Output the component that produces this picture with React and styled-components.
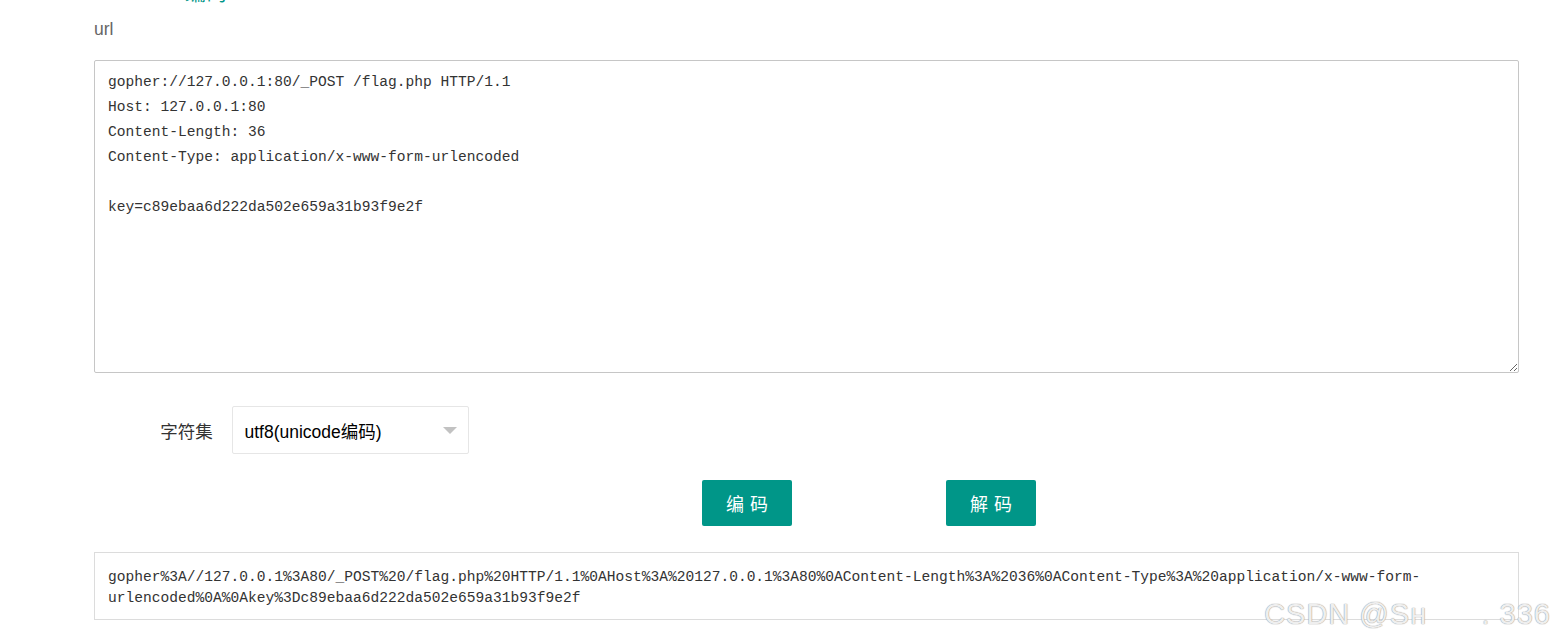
import React from 'react';
import styled, { createGlobalStyle } from 'styled-components';

const GlobalStyle = createGlobalStyle`
  html, body {
    margin: 0;
    padding: 0;
    background: #fff;
  }
  body {
    font-family: "Liberation Sans", "Noto Sans CJK SC", sans-serif;
  }
`;

const Page = styled.div`
  position: relative;
  height: 640px;
  overflow: hidden;
  padding: 0 38px 0 94px;
  box-sizing: border-box;
`;

// only the bottom of this tab title shows in the shot
const Title = styled.div`
  margin: -20px 0 0 91px;
  height: 25px;
  line-height: 25px;
  font-size: 21px;
  color: #009688;
`;

const UrlLabel = styled.div`
  margin-top: 14px;
  line-height: 20px;
  font-size: 17.5px;
  color: #666;
`;

const Source = styled.textarea`
  display: block;
  width: 100%;
  height: 313px;
  margin-top: 21px;
  padding: 9px 13px 8px;
  box-sizing: border-box;
  border: 1px solid #c6c6c6;
  border-radius: 2px;
  outline: none;
  font-family: "Liberation Mono", "DejaVu Sans Mono", monospace;
  font-size: 14.58px;
  line-height: 25px;
  color: #333;
  resize: both;
`;

const FormRow = styled.div`
  display: flex;
  align-items: center;
  margin-top: 33px;
`;

const FieldLabel = styled.label`
  width: 100px;
  padding: 0 18.75px;
  text-align: right;
  font-size: 17.5px;
  color: #333;
`;

const Select = styled.div`
  position: relative;
  width: 237px;
  height: 48px;
  box-sizing: border-box;
  border: 1px solid #e6e6e6;
  border-radius: 2px;
  padding-left: 12px;
  display: flex;
  align-items: center;
  font-size: 17.5px;
  color: #000;
`;

const Arrow = styled.span`
  position: absolute;
  right: 11px;
  top: 20px;
  width: 0;
  height: 0;
  border-left: 7px solid transparent;
  border-right: 7px solid transparent;
  border-top: 7px solid #c2c2c2;
`;

const ButtonRow = styled.div`
  display: flex;
  gap: 154px;
  margin-top: 26px;
  padding-left: 608px;
`;

const Button = styled.button`
  width: 90px;
  height: 46px;
  border: none;
  border-radius: 2px;
  background: #009688;
  color: #fff;
  font-family: "Noto Sans CJK SC", sans-serif;
  font-size: 18px;
  letter-spacing: 6px;
  text-indent: 6px;
  cursor: pointer;
`;

const Result = styled.div`
  margin-top: 26px;
  height: 68px;
  box-sizing: border-box;
  border: 1px solid #dcdcdc;
  padding: 14px 13px 0;
  font-family: "Liberation Mono", "DejaVu Sans Mono", monospace;
  font-size: 14.58px;
  line-height: 21px;
  color: #333;
`;

const Watermark = styled.div`
  position: absolute;
  right: 6px;
  bottom: 9px;
  font-family: "Liberation Sans", sans-serif;
  font-size: 29px;
  letter-spacing: 1px;
  color: rgba(255, 255, 255, 0.85);
  text-shadow: 0 0 1px #999, 0 0 1px #999;
  white-space: pre;
`;

const source = `gopher://127.0.0.1:80/_POST /flag.php HTTP/1.1
Host: 127.0.0.1:80
Content-Length: 36
Content-Type: application/x-www-form-urlencoded

key=c89ebaa6d222da502e659a31b93f9e2f`;

const encoded = 'gopher%3A//127.0.0.1%3A80/_POST%20/flag.php%20HTTP/1.1%0AHost%3A%20127.0.0.1%3A80%0AContent-Length%3A%2036%0AContent-Type%3A%20application/x-www-form-urlencoded%0A%0Akey%3Dc89ebaa6d222da502e659a31b93f9e2f';

const App = () => (
  <Page>
    <GlobalStyle />
    <Title>编码</Title>
    <UrlLabel>url</UrlLabel>
    <Source defaultValue={source} spellCheck={false} />
    <FormRow>
      <FieldLabel>字符集</FieldLabel>
      <Select>
        utf8(unicode编码)
        <Arrow />
      </Select>
    </FormRow>
    <ButtonRow>
      <Button>编码</Button>
      <Button>解码</Button>
    </ButtonRow>
    <Result>{encoded}</Result>
    <Watermark>{'CSDN @Sн      . 336'}</Watermark>
  </Page>
);

export default App;
